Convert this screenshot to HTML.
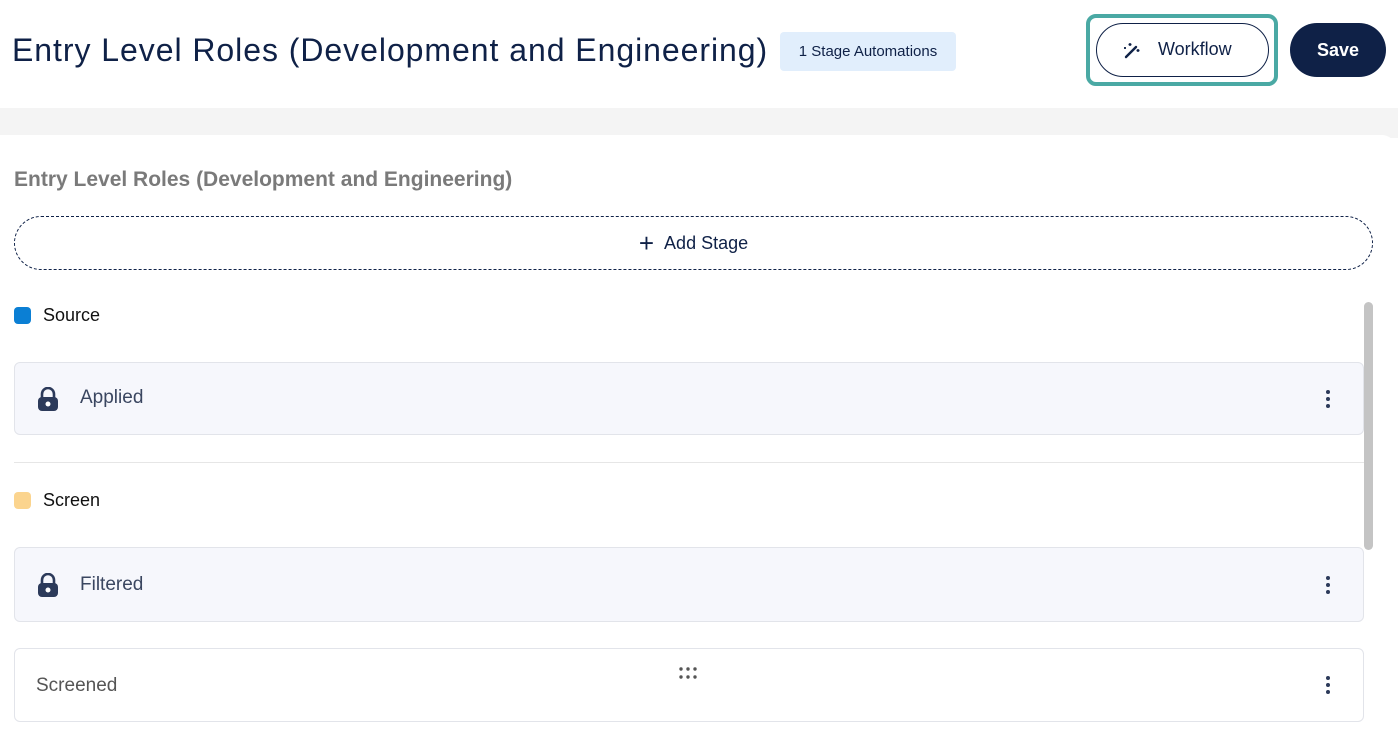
<!DOCTYPE html>
<html><head><style>
*{box-sizing:border-box;margin:0;padding:0}
body{width:1398px;height:737px;overflow:hidden;background:#fff;font-family:"Liberation Sans",sans-serif;color:#0f2147;position:relative}
.abs{position:absolute}
.title{left:12px;top:32px;font-size:32px;color:#0f2147;letter-spacing:0.95px;white-space:nowrap}
.badge{left:780px;top:32px;height:39px;width:176px;background:#e1eefc;border-radius:4px;font-size:15px;color:#0f2147;line-height:39px;text-align:center}
.wfo{left:1086px;top:14px;width:192px;height:72px;border:4px solid #4aa9a4;border-radius:10px}
.wf{left:1096px;top:23px;width:173px;height:54px;border:1.5px solid #0f2147;border-radius:27px;font-size:18px;line-height:51px;padding-left:61px}
.save{left:1290px;top:23px;width:96px;height:54px;background:#0f2147;border-radius:27px;color:#fff;font-weight:bold;font-size:18px;line-height:54px;text-align:center}
.band{left:0;top:108px;width:1398px;height:30px;background:#f4f4f4}
.card{left:0;top:135px;width:1396px;height:610px;background:#fff;border-top-right-radius:14px}
.sub{left:14px;top:168px;font-size:21px;font-weight:bold;color:#7a7a7a}
.add{left:14px;top:216px;width:1359px;height:54px;border:1.3px dashed #0f2147;border-radius:27px;text-align:center;line-height:52px;font-size:18px}
.grp{font-size:18px;color:#111}
.sq{width:17px;height:17px;border-radius:4px}
.row{left:14px;width:1350px;border:1px solid #e2e4ea;border-radius:6px;background:#f6f7fc;font-size:19px;color:#3a4660}
.dots{right:33px;top:50%;transform:translateY(-50%);width:4px}
.dots i{display:block;width:4px;height:4px;border-radius:2px;background:#2c3a5a;margin:3px 0}
.sb{left:1364px;top:302px;width:9px;height:248px;background:#c4c4c4;border-radius:5px}
</style></head><body>
<div class="abs title">Entry Level Roles (Development and Engineering)</div>
<div class="abs badge">1 Stage Automations</div>
<div class="abs wfo"></div>
<div class="abs wf"><svg class="abs" style="left:26px;top:17px" width="20" height="18" viewBox="0 0 20 18"><path d="M3 16 L13 6" stroke="#0f2147" stroke-width="2.4" stroke-linecap="round"/><path d="M7 2v3M5.5 3.5h3M15 8v3M13.5 9.5h3M2 6v2M1 7h2" stroke="#0f2147" stroke-width="1.4"/></svg>Workflow</div>
<div class="abs save">Save</div>
<div class="abs band"></div>
<div class="abs card"></div>
<div class="abs sub">Entry Level Roles (Development and Engineering)</div>
<div class="abs add"><span style="font-size:26px;vertical-align:-3px;margin-right:10px">+</span>Add Stage</div>
<div class="abs sq" style="left:14px;top:307px;background:#0b7fd4"></div>
<div class="abs grp" style="left:43px;top:305px">Source</div>
<div class="abs row" style="top:362px;height:73px"><svg class="abs" style="left:22px;top:24px" width="22" height="24" viewBox="0 0 22 24"><path d="M5 11V7a6 6 0 0 1 12 0v4" fill="none" stroke="#2c3a5a" stroke-width="2.6"/><rect x="1" y="10" width="20" height="14" rx="4" fill="#2c3a5a"/><circle cx="11" cy="17" r="2.5" fill="#fff"/></svg><span class="abs" style="left:65px;top:24px">Applied</span><div class="abs dots"><i></i><i></i><i></i></div></div>
<div class="abs" style="left:14px;top:462px;width:1350px;height:1px;background:#e6e6e6"></div>
<div class="abs sq" style="left:14px;top:492px;background:#fbd48e"></div>
<div class="abs grp" style="left:43px;top:490px">Screen</div>
<div class="abs row" style="top:547px;height:75px"><svg class="abs" style="left:22px;top:25px" width="22" height="24" viewBox="0 0 22 24"><path d="M5 11V7a6 6 0 0 1 12 0v4" fill="none" stroke="#2c3a5a" stroke-width="2.6"/><rect x="1" y="10" width="20" height="14" rx="4" fill="#2c3a5a"/><circle cx="11" cy="17" r="2.5" fill="#fff"/></svg><span class="abs" style="left:65px;top:26px">Filtered</span><div class="abs dots"><i></i><i></i><i></i></div></div>
<div class="abs row" style="top:648px;height:74px;background:#fff"><span class="abs" style="left:21px;top:26px;color:#555">Screened</span><svg class="abs" style="left:664px;top:17px" width="22" height="14"><g fill="#555"><circle cx="2" cy="3" r="1.7"/><circle cx="9" cy="3" r="1.7"/><circle cx="16" cy="3" r="1.7"/><circle cx="2" cy="11" r="1.7"/><circle cx="9" cy="11" r="1.7"/><circle cx="16" cy="11" r="1.7"/></g></svg><div class="abs dots"><i></i><i></i><i></i></div></div>
<div class="abs sb"></div>
</body></html>
